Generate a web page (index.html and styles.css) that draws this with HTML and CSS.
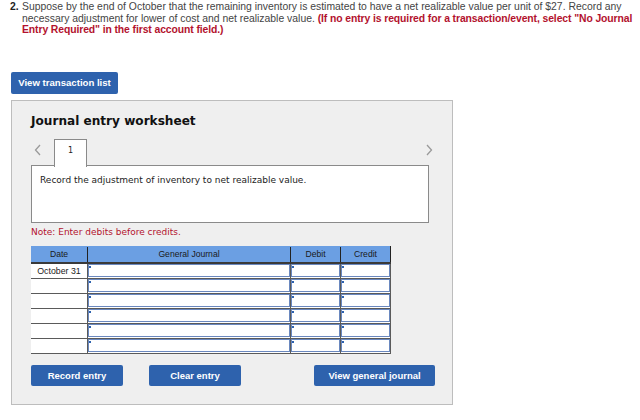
FILE: index.html
```html
<!DOCTYPE html>
<html>
<head>
<meta charset="utf-8">
<link rel="stylesheet" href="styles.css">
</head>
<body>
<div class="question">
  <span class="qnum">2.</span>
  <p class="qtext">Suppose by the end of October that the remaining inventory is estimated to have a net realizable value per unit of $27. Record any<br>necessary adjustment for lower of cost and net realizable value. <b class="red">(If no entry is required for a transaction/event, select "No Journal<br>Entry Required" in the first account field.)</b></p>
</div>

<button class="btn btn-list">View transaction list</button>

<div class="panel">
  <h2 class="title">Journal entry worksheet</h2>
  <div class="tabs">
    <svg class="arrow" width="8" height="12" viewBox="0 0 8 12"><polyline points="6,1 1.5,6 6,11" fill="none" stroke="#9a9a9a" stroke-width="1.3"/></svg>
    <div class="tab">1</div>
    <div class="spacer"></div>
    <svg class="arrow arrow-r" width="8" height="12" viewBox="0 0 8 12"><polyline points="2,1 6.5,6 2,11" fill="none" stroke="#9a9a9a" stroke-width="1.3"/></svg>
  </div>
  <div class="desc">Record the adjustment of inventory to net realizable value.</div>
  <p class="note">Note: Enter debits before credits.</p>

  <table class="journal">
    <thead>
      <tr><th class="c-date">Date</th><th class="c-gj">General Journal</th><th class="c-amt">Debit</th><th class="c-amt">Credit</th></tr>
    </thead>
    <tbody>
      <tr><td class="c-date">October 31</td><td><div class="inp"></div></td><td><div class="inp"></div></td><td><div class="inp"></div></td></tr>
      <tr><td class="c-date"></td><td><div class="inp"></div></td><td><div class="inp"></div></td><td><div class="inp"></div></td></tr>
      <tr><td class="c-date"></td><td><div class="inp"></div></td><td><div class="inp"></div></td><td><div class="inp"></div></td></tr>
      <tr><td class="c-date"></td><td><div class="inp"></div></td><td><div class="inp"></div></td><td><div class="inp"></div></td></tr>
      <tr><td class="c-date"></td><td><div class="inp"></div></td><td><div class="inp"></div></td><td><div class="inp"></div></td></tr>
      <tr><td class="c-date"></td><td><div class="inp"></div></td><td><div class="inp"></div></td><td><div class="inp"></div></td></tr>
    </tbody>
  </table>

  <div class="actions">
    <button class="btn btn-record">Record entry</button>
    <button class="btn btn-clear">Clear entry</button>
    <button class="btn btn-view">View general journal</button>
  </div>
</div>
</body>
</html>
```
FILE: styles.css
```css
html, body {
  margin: 0;
  padding: 0;
  background: #ffffff;
  width: 640px;
  height: 420px;
  overflow: hidden;
}
body {
  font-family: "Liberation Sans", Arial, sans-serif;
  color: #333;
}
.question {
  display: flex;
  padding: 1px 0 0 10px;
  font-size: 10.4px;
  line-height: 11.6px;
  white-space: nowrap;
}
.qnum {
  font-weight: bold;
  color: #222;
  width: 12px;
  flex: none;
}
.qtext {
  margin: 0;
  color: #444;
}
.red {
  color: #b3122e;
  letter-spacing: -0.1px;
}
.btn {
  display: block;
  border: none;
  border-radius: 2px;
  background: #2e62ad;
  color: #fff;
  font-family: "Liberation Sans", Arial, sans-serif;
  font-weight: bold;
  font-size: 9.6px;
  padding: 0;
  cursor: pointer;
}
.btn-list {
  margin: 36px 0 0 11px;
  width: 107px;
  height: 22px;
}
.panel {
  margin: 6px 0 0 11px;
  height: 303px;
  border: 1px solid #bdbdbd;
  background: #efefef;
  padding: 0 0 0 19px;
  box-sizing: content-box;
  width: 421px;
}
.title {
  margin: 0;
  padding-top: 12px;
  font-family: "DejaVu Sans", Verdana, sans-serif;
  font-weight: bold;
  font-size: 12.1px;
  line-height: 16px;
  color: #111;
}
.tabs {
  display: flex;
  align-items: flex-start;
  margin-top: 10px;
  width: 402px;
  height: 27px;
  position: relative;
  z-index: 1;
}
.arrow {
  margin: 5px 0 0 3px;
  flex: none;
}
.arrow-r {
  margin: 5px 0 0 0;
}
.spacer {
  flex: 1;
}
.tab {
  margin-left: 12px;
  width: 31px;
  height: 27px;
  background: #fff;
  border: 1px solid #8a8a8a;
  border-bottom: none;
  font-family: "DejaVu Sans", Verdana, sans-serif;
  font-size: 8px;
  color: #222;
  text-align: center;
  line-height: 22px;
  box-sizing: content-box;
}
.desc {
  margin-top: -1px;
  width: 388px;
  height: 47px;
  background: #fff;
  border: 1px solid #8a8a8a;
  padding: 9px 0 0 8px;
  font-family: "DejaVu Sans", Verdana, sans-serif;
  font-size: 9px;
  line-height: 11px;
  color: #222;
}
.note {
  margin: 4px 0 0 0;
  font-family: "DejaVu Sans", Verdana, sans-serif;
  font-size: 9px;
  line-height: 11px;
  color: #b3122e;
}
.journal {
  margin-top: 8px;
  border-collapse: collapse;
  width: 356px;
  table-layout: fixed;
  font-family: "Liberation Sans", Arial, sans-serif;
  font-size: 8.6px;
}
.journal th {
  background: #6b9fe3;
  color: #1a1a1a;
  font-weight: normal;
  height: 15px;
  padding: 0;
  border-left: 1.5px solid #222;
  border-top: 1px solid #6b9fe3;
  border-bottom: 2px solid #3a3a3a;
}
.journal th.c-date {
  border-left: none;
}
.journal th:last-child {
  border-right: 1.5px solid #222;
}
.c-date { width: 56px; }
.c-gj { width: 202px; }
.c-amt { width: 49px; }
.journal td {
  height: 14px;
  padding: 0;
  background: #fff;
  border-bottom: 1.5px solid #5a5a5a;
  border-left: 1.5px solid #5a5a5a;
}
.journal td.c-date {
  border-left: none;
  text-align: center;
  color: #222;
  font-size: 8.8px;
}
.journal td:last-child {
  border-right: 1.5px solid #5a5a5a;
}
.inp {
  height: 13px;
  border: 1px solid #6a88bf;
  box-sizing: border-box;
  background: #fff;
  position: relative;
}
.inp::before {
  content: "";
  position: absolute;
  left: 0;
  top: 1px;
  width: 2px;
  height: 2px;
  background: #2e62ad;
}
.actions {
  display: flex;
  margin-top: 11px;
}
.actions .btn {
  height: 21px;
  font-size: 9.5px;
}
.btn-record { width: 92px; }
.btn-clear { width: 92px; margin-left: 26px; }
.btn-view { width: 121px; margin-left: 73px; }
```
